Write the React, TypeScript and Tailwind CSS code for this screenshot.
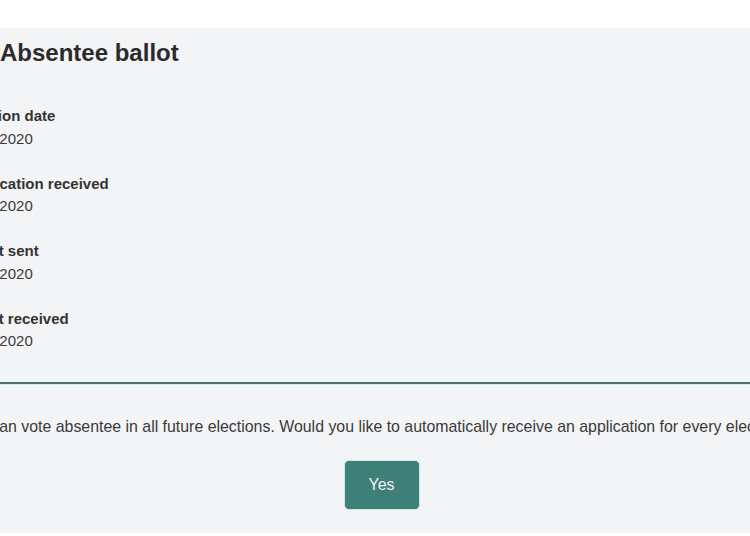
import React from "react";

const items = [
  { label: "Election date", date: "9/22/2020" },
  { label: "Application received", date: "9/24/2020" },
  { label: "Ballot sent", date: "9/28/2020" },
  { label: "Ballot received", date: "9/29/2020" },
];

export default function App() {
  return (
    <div className="w-[750px] h-[536px] bg-white overflow-hidden font-['Liberation_Sans',Arial,sans-serif]">
      <div className="mt-[28px] h-[505px] bg-[#f3f4f6] overflow-hidden pt-[7px]">
        <h1 className="text-[24px] leading-[36px] font-bold text-[#2b2b2b]">Absentee ballot</h1>
        <dl className="ml-[-34px] mt-[34.2px] flex flex-col gap-[22.5px] text-[15px] leading-[22.5px]">
          {items.map((it) => (
            <div key={it.label}>
              <dt className="ml-[-4px] font-bold text-[#333333]">{it.label}</dt>
              <dd className="text-[#3a3a3a]">{it.date}</dd>
            </div>
          ))}
        </dl>
        <div className="mt-[29.3px] h-[2px] bg-[#4b6f6c] shadow-[0_1px_0_#cdeef0]" />
        <p className="mt-[32.1px] ml-[-40px] whitespace-nowrap text-[15.9px] leading-[21px] text-[#3a3a3a]">
          You can vote absentee in all future elections. Would you like to automatically receive an application for every election?
        </p>
        <div className="mt-[22.9px] flex justify-center pl-[13px]">
          <button className="w-[76px] h-[50px] rounded-[5px] bg-[#3e7f77] border border-[#c6ebe7] text-[16px] text-[#eef5f4]">
            Yes
          </button>
        </div>
      </div>
    </div>
  );
}
